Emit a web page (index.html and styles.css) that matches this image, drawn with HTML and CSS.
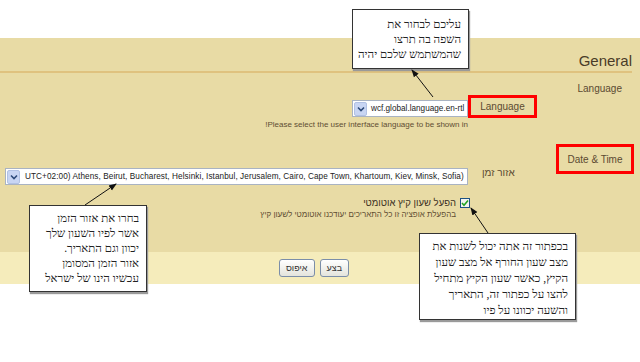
FILE: index.html
```html
<!DOCTYPE html>
<html lang="he" dir="rtl">
<head>
<meta charset="UTF-8" />
<title>General</title>
<link rel="stylesheet" href="styles.css">
</head>
<body>
  <div class="page">
    <div class="top"></div>

    <div class="content">
      <h2 class="title">General</h2>

      <div class="legend">Language</div>
      <div class="row row-lang">
        <div class="label-cell"><span class="mark mark-label">Language</span></div>
        <div class="field-cell">
          <div class="select select-lang">
            <span class="select-arrow"><svg width="8" height="6" viewBox="0 0 8 6"><path d="M1 1.5 L4 4.5 L7 1.5" fill="none" stroke="#2d4a7a" stroke-width="1.6"/></svg></span>
            <span class="select-text">wcf.global.language.en-rtl</span>
          </div>
        </div>
      </div>
      <p class="desc desc-lang">Please select the user interface language to be shown in!</p>

      <div class="legend-mark"><span class="mark mark-legend">Date &amp; Time</span></div>
      <div class="row row-tz">
        <div class="label-cell"><span class="label">אזור זמן</span></div>
        <div class="field-cell">
          <div class="select select-tz">
            <span class="select-arrow"><svg width="8" height="6" viewBox="0 0 8 6"><path d="M1 1.5 L4 4.5 L7 1.5" fill="none" stroke="#2d4a7a" stroke-width="1.6"/></svg></span>
            <span class="select-text">UTC+02:00) Athens, Beirut, Bucharest, Helsinki, Istanbul, Jerusalem, Cairo, Cape Town, Khartoum, Kiev, Minsk, Sofia)</span>
          </div>
        </div>
      </div>
      <div class="check-row">
        <span class="checkbox"><svg width="8" height="8" viewBox="0 0 8 8"><path d="M1 4 L3 6.2 L7 1.5" fill="none" stroke="#21a321" stroke-width="1.6"/></svg></span>
        <span class="check-label">הפעל שעון קיץ אוטומטי</span>
      </div>
      <p class="desc desc-dst">בהפעלת אופציה זו כל התאריכים יעודכנו אוטומטי לשעון קיץ</p>
    </div>

    <div class="buttons">
      <button class="btn">בצע</button>
      <button class="btn">איפוס</button>
    </div>

    <!-- annotations -->
    <div class="callout callout-lang">
      עליכם לבחור את<br>השפה בה תרצו<br>שהמשתמש שלכם יהיה
    </div>
    <div class="callout callout-tz">
      בחרו את אזור הזמן<br>אשר לפיו השעון שלך<br>יכוון וגם התאריך.<br>אזור הזמן המסומן<br>עכשיו הינו של ישראל
    </div>
    <div class="callout callout-dst">
      בכפתור זה אתה יכול לשנות את<br>מצב שעון החורף אל מצב שעון<br>הקיץ, כאשר שעון הקיץ מתחיל<br>להצו על כפתור זה, התאריך<br>והשעה יכוונו על פיו
    </div>

    <svg class="arrows" width="640" height="362" viewBox="0 0 640 362">
      <defs>
        <marker id="head" markerWidth="8" markerHeight="8" refX="7" refY="4" orient="auto" markerUnits="userSpaceOnUse">
          <path d="M0 1 L8 4 L0 7 Z" fill="#111"/>
        </marker>
      </defs>
      <line x1="433" y1="97" x2="412" y2="70" stroke="#111" stroke-width="1" marker-end="url(#head)"/>
      <line x1="85" y1="205" x2="116" y2="184" stroke="#111" stroke-width="1" marker-end="url(#head)"/>
      <line x1="488" y1="233" x2="471" y2="208" stroke="#111" stroke-width="1" marker-end="url(#head)"/>
    </svg>
  </div>
</body>
</html>
```

FILE: styles.css
```css
/* Base */
body {
  margin: 0;
  background: #fff;
  font-family: 'Liberation Sans', 'DejaVu Sans', sans-serif;
  color: #4f3f2a;
}
.page {
  position: relative;
  width: 640px;
  height: 362px;
  overflow: hidden;
}
.top {
  height: 38px;
}

/* Beige form area */
.content {
  background: #e8dba5;
  padding-right: 8px;
  height: 214px;
}
.title {
  margin: 0;
  padding-top: 14px;
  padding-bottom: 1px;
  font-size: 15px;
  line-height: 18px;
  font-weight: normal;
  color: #4a3b28;
  border-bottom: 2px solid #dfc27f;
}
.legend {
  margin-top: 10px;
  margin-right: 10px;
  font-size: 10px;
  line-height: 12px;
  color: #5b4a32;
}
.row {
  display: flex;
}
.label-cell {
  width: 164px;
  flex: none;
  display: flex;
  justify-content: flex-end;
  font-size: 10px;
  color: #5b4a32;
}
.field-cell {
  flex: 1;
}
.row-lang {
  height: 23px;
}
.row-lang .field-cell {
  padding-top: 5px;
}
.mark {
  border: 3px solid #f00;
  box-sizing: border-box;
  display: flex;
  align-items: center;
  justify-content: center;
  font-size: 10px;
  color: #5b4a32;
}
.mark-label {
  width: 69px;
  height: 23px;
}
.legend-mark {
  margin-top: 14px;
  margin-right: -2px;
  margin-bottom: -8px;
  height: 30px;
}
.mark-legend {
  width: 78px;
  height: 30px;
}

/* Fake select boxes */
.select {
  direction: ltr;
  display: flex;
  align-items: center;
  height: 17px;
  box-sizing: border-box;
  background: #fff;
  border: 1px solid #a9b3c2;
  overflow: hidden;
}
.select-arrow {
  flex: none;
  width: 11px;
  height: 12px;
  margin-left: 1px;
  background: #c8d5f3;
  border: 1px solid #b1c1e4;
  border-radius: 2px;
  display: flex;
  align-items: center;
  justify-content: center;
}
.select-text {
  padding-left: 5px;
  font-size: 8.2px;
  letter-spacing: 0.08px;
  white-space: nowrap;
  color: #222;
}
.select-lang {
  width: 116px;
}
.select-lang .select-text {
  letter-spacing: 0;
  padding-left: 4px;
}
.row-tz .field-cell {
  padding-top: 2px;
}
.row-tz .label {
  padding-top: 1px;
  padding-left: 14px;
  font-size: 10px;
  line-height: 12px;
}
.select-tz {
  width: 463px;
}

.desc {
  margin: 0;
  font-size: 8px;
  line-height: 10px;
  color: #5f4e33;
}
.desc-lang {
  margin-top: 2px;
  margin-right: 164px;
}
.check-row {
  margin-top: 12px;
  margin-right: 162px;
  display: flex;
  align-items: center;
  gap: 4px;
}
.checkbox {
  width: 10px;
  height: 10px;
  box-sizing: border-box;
  border: 1px solid #1d5283;
  background: #f2f4f0;
  display: flex;
  align-items: center;
  justify-content: center;
}
.check-label {
  font-size: 9.5px;
  color: #3b2f22;
}
.desc-dst {
  margin-top: 2px;
  margin-right: 176px;
}

/* Button bar */
.buttons {
  background: #f5ecbb;
  height: 32px;
  display: flex;
  justify-content: center;
  align-items: flex-start;
  gap: 5px;
  padding-right: 12px;
}
.btn {
  margin-top: 7px;
  height: 18px;
  padding: 0 6px;
  font-family: 'Liberation Sans', 'DejaVu Sans', sans-serif;
  font-size: 9px;
  color: #333;
  background: linear-gradient(#ffffff, #e4e4dc);
  border: 1px solid #7b8ea9;
  border-radius: 3px;
}

/* Annotations */
.callout {
  position: absolute;
  background: #fff;
  border: 1px solid #333;
  box-shadow: 1px 2px 1px #9a9a9a;
  font-family: 'Liberation Serif', 'DejaVu Serif', serif;
  font-size: 11.5px;
  line-height: 15px;
  color: #222;
  box-sizing: border-box;
  padding: 7px 7px 0 0;
  text-align: right;
  white-space: nowrap;
}
.callout-lang {
  left: 352px;
  top: 9px;
  width: 117px;
  height: 60px;
}
.callout-tz {
  left: 29px;
  top: 205px;
  width: 118px;
  height: 87px;
  padding-top: 5px;
}
.callout-dst {
  left: 419px;
  top: 233px;
  width: 157px;
  height: 87px;
  line-height: 16px;
  padding-top: 4px;
}
.arrows {
  position: absolute;
  left: 0;
  top: 0;
}
```
